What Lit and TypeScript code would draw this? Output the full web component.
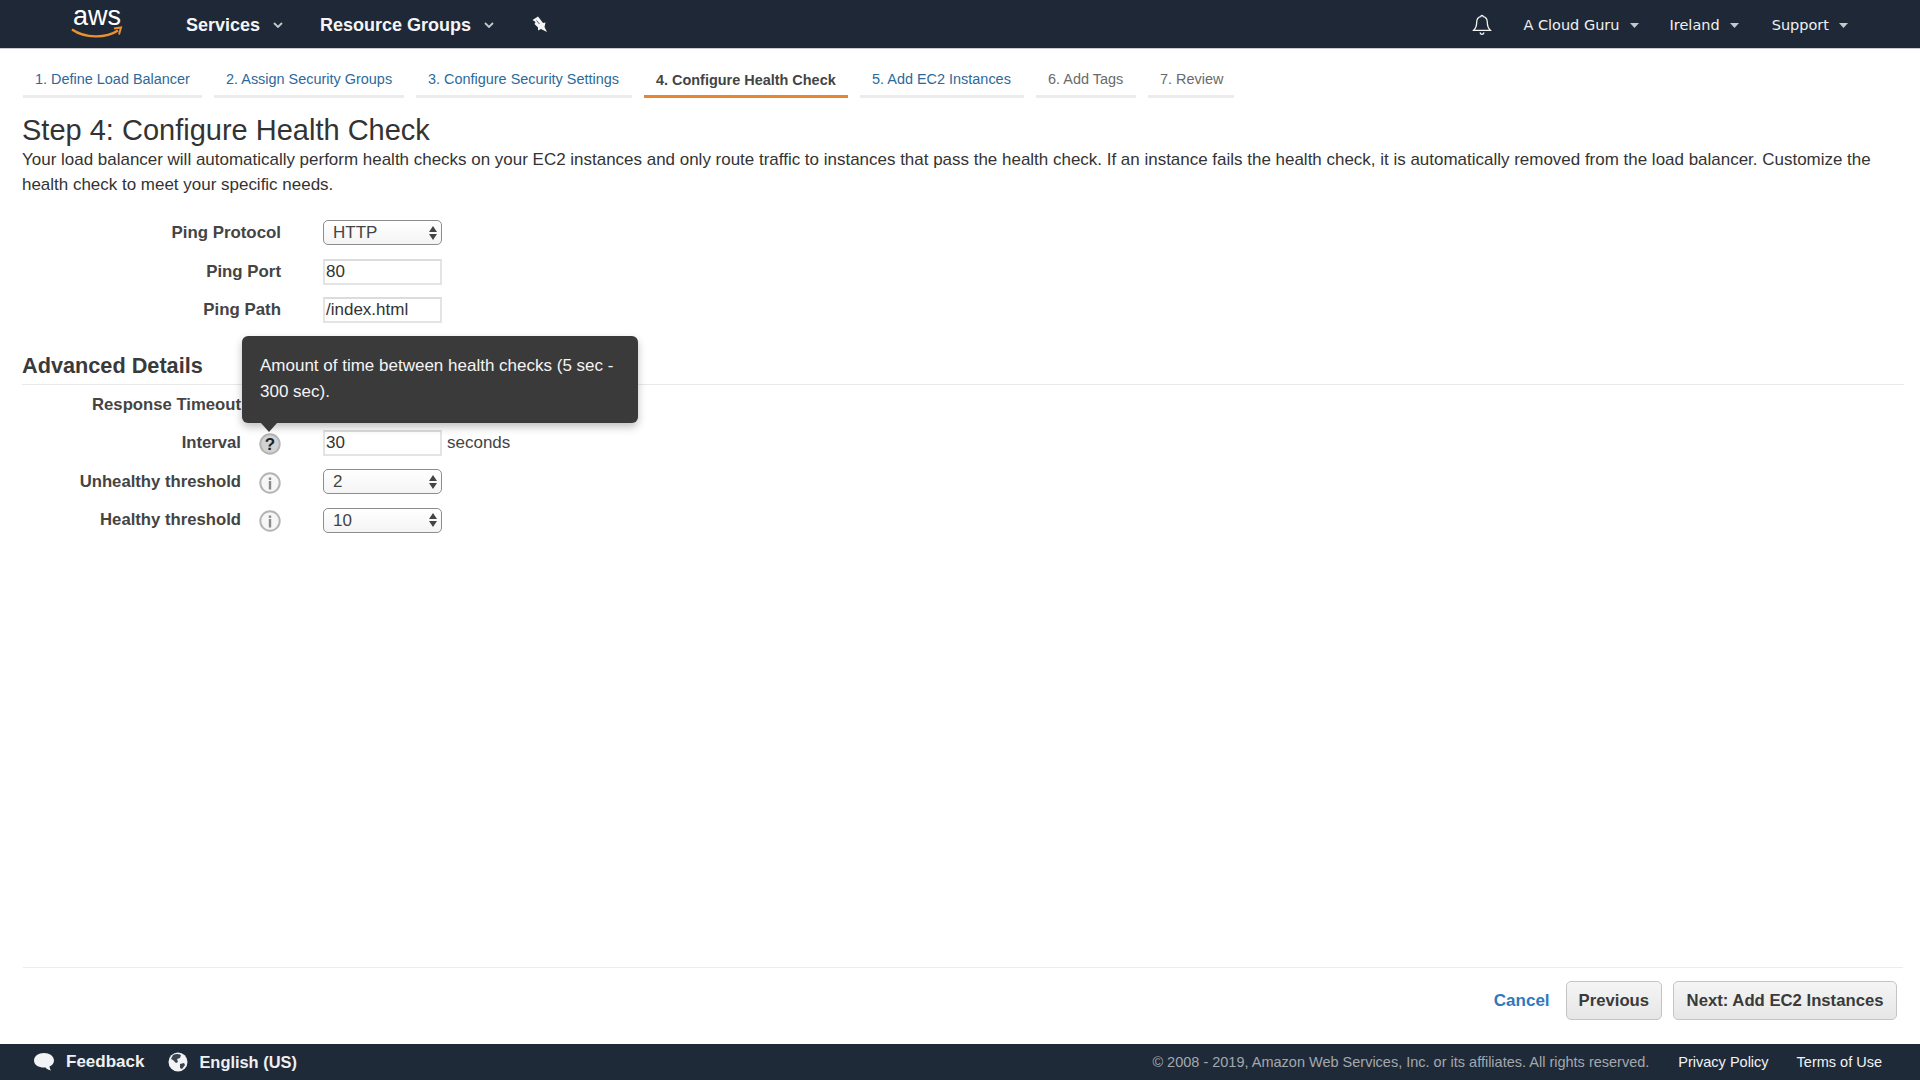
import { LitElement, html, css, svg } from "lit";
import { customElement } from "lit/decorators.js";

const caret = html`<svg class="caret" width="10" height="6" viewBox="0 0 10 6"><path d="M1 1l4 4 4-4" fill="none" stroke="currentColor" stroke-width="1.8"/></svg>`;
const solidCaret = html`<svg class="caret" width="9" height="5" viewBox="0 0 9 5"><path d="M0 0h9L4.500 5z" fill="currentColor"/></svg>`;

const tabs = [
  ["1. Define Load Balancer", "link", 179],
  ["2. Assign Security Groups", "link", 190],
  ["3. Configure Security Settings", "link", 216],
  ["4. Configure Health Check", "active", 204],
  ["5. Add EC2 Instances", "link", 164],
  ["6. Add Tags", "muted", 100],
  ["7. Review", "muted", 86],
] as const;

@customElement("app-root")
export class AppRoot extends LitElement {
  static styles = css`
    :host { display: block; font-family: "Liberation Sans", Arial, sans-serif; color: #333; }
    * { box-sizing: border-box; }
    .page { height: 1080px; display: flex; flex-direction: column; background: #fff; position: relative; overflow: hidden; }
    .topbar { height: 49px; flex: none; background: #1f2836; border-bottom: 1px solid #c9ccd0; display: flex; align-items: center; color: #fff; padding-left: 71px; }
    .logo { width: 52px; height: 48px; flex: none; display: block; }
    .nav { font-size: 18px; font-weight: 700; display: flex; align-items: center; color: #f4f5f6; padding-top: 2px; }
    .nav .caret { margin-left: 13px; color: #c4c8cd; }
    .services { margin-left: 63px; }
    .groups { margin-left: 37px; }
    .pin { margin-left: 37px; display: block; }
    .spacer { flex: 1; }
    .bell { display: block; margin: 2px 31px 0 0; }
    .util { font-family: "DejaVu Sans", Verdana, sans-serif; font-size: 14.500px; display: flex; align-items: center; color: #f0f1f2; padding-top: 2px; }
    .util .caret { margin-left: 10px; color: #c4c8cd; }
    .util.ie { margin-left: 31px; }
    .util.sup { margin-left: 33px; margin-right: 72px; }
    .tabs { display: flex; gap: 12px; padding: 14px 0 0 23px; flex: none; }
    .tab { height: 35px; border-bottom: 3px solid #eaeded; font-size: 14.450px; padding: 8px 0 0 12px; white-space: nowrap; flex: none; }
    .tab.link { color: #2d6a9b; }
    .tab.muted { color: #6a6a6a; }
    .tab.active { color: #444; font-weight: 700; border-bottom-color: #e8852f; padding-top: 9px; }
    .content { flex: 1; min-height: 0; padding: 15px 0 0 22px; position: relative; }
    h1 { margin: 0; font-size: 29px; font-weight: 400; line-height: 34px; color: #333; }
    .intro { margin: 0; width: 1882px; font-size: 16.980px; line-height: 25px; color: #333; }
    .form { display: grid; row-gap: 12.500px; grid-auto-rows: 26px; margin-top: 23px; grid-template-columns: 259px 42px auto; align-items: center; }
    .form .label { grid-column: 1; text-align: right; font-size: 16.850px; font-weight: 700; color: #444; }
    .form .ctl { grid-column: 3; }
    .form .ctl .sel { margin-top: -1px; }
    h2 { margin: 29px 0 0; font-size: 21.700px; font-weight: 700; line-height: 28px; color: #3a3a3a; border-bottom: 1px solid #e8e8e8; width: 1882px; height: 33px; }
    .adv { display: grid; row-gap: 12.500px; grid-auto-rows: 26px; margin-top: 6.500px; grid-template-columns: 219px 82px auto; justify-content: start; align-items: center; }
    .adv .label { text-align: right; font-size: 16.700px; font-weight: 700; color: #444; }
    .adv .icon { justify-self: start; margin: 2px 0 0 17.500px; display: block; }
    .adv .ctl { display: flex; align-items: center; }
    .input { width: 119px; height: 26px; border: 2px solid #e4e4e4; border-top-color: #dcdcdc; font-size: 17px; line-height: 22px; padding-left: 1px; color: #333; background: #fff; }
    .sel { width: 119px; height: 25px; border: 1px solid #8d8d8d; border-radius: 5px; background: linear-gradient(#fff, #f4f4f4); font-size: 17px; line-height: 21px; padding-left: 9px; color: #444; display: flex; justify-content: space-between; align-items: center; padding-right: 3px; }
    .sel svg { display: block; }
    .unit { margin-left: 5px; font-size: 17px; color: #444; }
    .tooltip { position: absolute; left: 242px; top: 238px; width: 396px; height: 87px; background: #3a3a3a; border-radius: 6px; color: #f4f4f4; font-size: 17px; line-height: 26px; padding: 17px 14px 0 18px; box-shadow: 0 4px 8px rgba(0,0,0,.25); }
    .tooltip::after { content: ""; position: absolute; left: 19px; bottom: -9px; border-left: 8px solid transparent; border-right: 8px solid transparent; border-top: 9px solid #3a3a3a; }
    .wizard { flex: none; margin: 0 17px 0 23px; border-top: 1px solid #ececec; height: 77px; display: flex; justify-content: flex-end; align-items: flex-start; padding-top: 13px; padding-right: 6px; }
    .cancel { color: #2f78bd; font-size: 17px; font-weight: 700; line-height: 39px; margin-right: 16px; }
    .btn { height: 39px; border: 1px solid #c4c4c4; border-radius: 5px; background: linear-gradient(#f5f5f5, #e6e6e6); font-size: 16.700px; font-weight: 700; color: #3a3a3a; display: flex; align-items: center; padding: 0 12px; }
    .btn + .btn { margin-left: 11px; padding: 0 12.500px; }
    .footer { height: 36px; flex: none; background: #1f2a38; display: flex; align-items: center; font-size: 14px; color: #f2f3f4; padding: 0 38px 0 33px; }
    .fl { font-size: 17px; font-weight: 700; display: flex; align-items: center; color: #eff0f1; }
    .fl svg { display: block; margin-right: 11px; }
    .lang { margin-left: 24px; font-size: 16.400px; }
    .copy { color: #a3a8ae; font-size: 14.500px; }
    .fr { font-size: 14.500px; color: #f2f3f4; }
    .privacy { margin-left: 29px; }
    .terms { margin-left: 28px; }
  `;

  private arrows() {
    return html`<svg width="10" height="16" viewBox="0 0 10 16"><path d="M5 1l4 6H1zM5 15L1 9h8z" fill="#444"/></svg>`;
  }

  private sel(v: string) {
    return html`<div class="sel"><span>${v}</span>${this.arrows()}</div>`;
  }

  private info(q = false) {
    return html`<svg class="icon" width="22" height="22" viewBox="0 0 22 22">
      <circle cx="11" cy="11" r="9.700" fill="${q ? "#d2d2d2" : "#f6f6f6"}" stroke="#b4b4b4" stroke-width="2"/>
      ${q
        ? svg`<text x="11" y="17" text-anchor="middle" font-size="17" font-weight="700" font-family="Liberation Sans, sans-serif" fill="#222">?</text>`
        : svg`<rect x="9.800" y="5.500" width="2.400" height="2.400" fill="#8a8a8a"/><rect x="9.800" y="9" width="2.400" height="8.500" fill="#8a8a8a"/>`}
    </svg>`;
  }

  render() {
    return html`<div class="page">
      <header class="topbar">
        <svg class="logo" viewBox="0 0 52 48">
          <text x="26" y="24.500" text-anchor="middle" font-family="Liberation Sans, sans-serif" font-size="27" fill="#fff">aws</text>
          <path d="M1 29.500c13 9 34 9 46 1" fill="none" stroke="#ec912d" stroke-width="2.400"/>
          <path d="M43 28.500l7-1-2 7" fill="none" stroke="#ec912d" stroke-width="2"/>
        </svg>
        <div class="nav services">Services${caret}</div>
        <div class="nav groups">Resource Groups${caret}</div>
        <svg class="pin" width="16" height="16" viewBox="0 0 16 16"><path d="M1.500 4L7 0.500l2 2.500 3 4 2.500-.5-1 4.500 2.500 5-6-3-3 1.500v-3L3.500 8l1-2z" fill="#f4f4f4"/><path d="M5.500 4.500l3 3.500" stroke="#5a626e" stroke-width="1"/></svg>
        <div class="spacer"></div>
        <svg class="bell" width="20" height="22" viewBox="0 0 20 22"><path d="M10 1.500c.8 0 1.200.5 1.300 1.200 2.700.6 4 2.900 4 5.600 0 4 1 6 3 8H1.700c2-2 3-4 3-8 0-2.700 1.300-5 4-5.600.1-.7.5-1.200 1.300-1.200zM8 18.500c.3 1.200 1 1.800 2 1.800s1.700-.6 2-1.800" fill="none" stroke="#f2f2f2" stroke-width="1.300"/></svg>
        <div class="util">A Cloud Guru${solidCaret}</div>
        <div class="util ie">Ireland${solidCaret}</div>
        <div class="util sup">Support${solidCaret}</div>
      </header>
      <nav class="tabs">
        ${tabs.map(([t, c, w]) => html`<div class="tab ${c}" style="width:${w}px">${t}</div>`)}
      </nav>
      <main class="content">
        <h1>Step 4: Configure Health Check</h1>
        <p class="intro">Your load balancer will automatically perform health checks on your EC2 instances and only route traffic to instances that pass the health check. If an instance fails the health check, it is automatically removed from the load balancer. Customize the health check to meet your specific needs.</p>
        <div class="form">
          <div class="label">Ping Protocol</div><div class="ctl">${this.sel("HTTP")}</div>
          <div class="label">Ping Port</div><div class="ctl"><div class="input">80</div></div>
          <div class="label">Ping Path</div><div class="ctl"><div class="input">/index.html</div></div>
        </div>
        <h2>Advanced Details</h2>
        <div class="adv">
          <div class="label">Response Timeout</div><span></span><div class="ctl"></div>
          <div class="label">Interval</div>${this.info(true)}<div class="ctl"><div class="input">30</div><span class="unit">seconds</span></div>
          <div class="label">Unhealthy threshold</div>${this.info()}<div class="ctl">${this.sel("2")}</div>
          <div class="label">Healthy threshold</div>${this.info()}<div class="ctl">${this.sel("10")}</div>
        </div>
        <div class="tooltip">Amount of time between health checks (5 sec - 300 sec).</div>
      </main>
      <div class="wizard">
        <span class="cancel">Cancel</span>
        <div class="btn">Previous</div>
        <div class="btn">Next: Add EC2 Instances</div>
      </div>
      <footer class="footer">
        <div class="fl">
          <svg width="22" height="20" viewBox="0 0 22 20"><path d="M11 1c5.500 0 10 3 10 7.500 0 3-2 5-4.500 6 .2 1.500.8 3 1.500 4-2.500-.3-4.500-1.800-5.500-3H11C5.500 15.500 1 13 1 8.500S5.500 1 11 1z" fill="#f2f3f4"/></svg>
          Feedback
        </div>
        <div class="fl lang">
          <svg width="20" height="20" viewBox="0 0 20 20"><circle cx="10" cy="10" r="9.500" fill="#f2f3f4"/><path d="M5 3c3-1.500 6-1 8 0l-1 3-3 1 1 3-2 1-3-3-2-1zM12 12l4-1 1 2-3 4-2-1z" fill="#3a4552"/></svg>
          English (US)
        </div>
        <div class="spacer"></div>
        <span class="copy">© 2008 - 2019, Amazon Web Services, Inc. or its affiliates. All rights reserved.</span>
        <span class="fr privacy">Privacy Policy</span>
        <span class="fr terms">Terms of Use</span>
      </footer>
    </div>`;
  }
}
